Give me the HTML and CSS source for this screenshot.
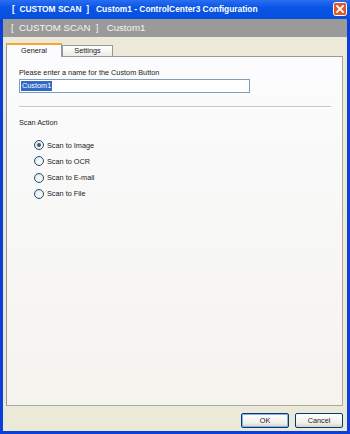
FILE: index.html
```html
<!DOCTYPE html>
<html>
<head>
<title>[ CUSTOM SCAN ] Custom1 - ControlCenter3 Configuration</title>
<link rel="stylesheet" href="styles.css">
</head>
<body>
<div class="window">
  <div class="titlebar">
    <div class="title">[&nbsp; CUSTOM SCAN &nbsp;]&nbsp;&nbsp; Custom1 - ControlCenter3 Configuration</div>
    <div class="close">
      <svg width="14" height="14" viewBox="0 0 14 14">
        <rect x="0.5" y="0.5" width="13" height="13" rx="2" fill="#e3582b" stroke="#fff"/>
        <path d="M4 4 L10 10 M10 4 L4 10" stroke="#fff" stroke-width="1.8" stroke-linecap="square"/>
      </svg>
    </div>
  </div>
  <div class="banner">[&nbsp; CUSTOM SCAN &nbsp;]&nbsp;&nbsp; Custom1</div>
  <div class="body">
    <div class="tabs">
      <div class="tab active">General</div>
      <div class="tab">Settings</div>
    </div>
    <div class="panel">
      <div class="label">Please enter a name for the Custom Button</div>
      <div class="input"><span class="sel">Custom1</span></div>
      <div class="sep"></div>
      <div class="label">Scan Action</div>
      <div class="radios">
        <div class="radio checked"><span class="dot"></span>Scan to Image</div>
        <div class="radio"><span class="dot"></span>Scan to OCR</div>
        <div class="radio"><span class="dot"></span>Scan to E-mail</div>
        <div class="radio"><span class="dot"></span>Scan to File</div>
      </div>
    </div>
    <div class="buttons">
      <button class="btn default">OK</button>
      <button class="btn">Cancel</button>
    </div>
  </div>
</div>
</body>
</html>
```

FILE: styles.css
```css
body {
  margin: 0;
  font-family: 'Liberation Sans', Arial, sans-serif;
  font-size: 7.3px;
  color: #222;
}

.window {
  width: 350px;
  height: 434px;
  box-sizing: border-box;
  display: flex;
  flex-direction: column;
  background-color: #0a3fd8;
  padding: 0 3px 3px 3px;
}

.titlebar {
  height: 19px;
  margin: 0 -3px;
  padding: 0 3px 0 12px;
  display: flex;
  align-items: center;
  justify-content: space-between;
  background: linear-gradient(#2a6ef0, #0a55e6 40%, #0650de);
}

.title {
  color: #fff;
  font-weight: bold;
  font-size: 8.4px;
}

.close {
  width: 14px;
  height: 14px;
  margin-top: -1px;
}

.banner {
  height: 19px;
  display: flex;
  align-items: center;
  padding-left: 8px;
  background-color: #9a9a9a;
  color: #f4f4f4;
  font-size: 9.7px;
}

.body {
  flex: 1;
  background-color: #ece9d8;
  display: flex;
  flex-direction: column;
  padding: 6px 4px 3px 3px;
}

.tabs {
  display: flex;
  align-items: flex-end;
  height: 13px;
}

.tab {
  height: 11px;
  width: 51px;
  box-sizing: border-box;
  text-align: center;
  line-height: 10px;
  border: 1px solid #919b9c;
  border-bottom: none;
  background: linear-gradient(#fff, #ecebe6);
}

.tab.active {
  height: 14px;
  width: 56px;
  margin-bottom: -1px;
  border-top: 2px solid #f4a83c;
  background: #fcfcfe;
  position: relative;
  z-index: 1;
  line-height: 11px;
}

.panel {
  height: 350px;
  box-sizing: border-box;
  border: 1px solid #919b9c;
  border-right-color: #a9a9a4;
  border-bottom-color: #a9a9a4;
  background: linear-gradient(#fcfcfe, #f4f3ee);
  padding: 11px 12px 0 12px;
}

.label {
  line-height: 10px;
}

.input {
  width: 231px;
  height: 14px;
  box-sizing: border-box;
  border: 1px solid #7f9db9;
  background-color: #fff;
  padding: 1px 1px;
  margin-top: 1px;
}

.sel {
  background-color: #316ac5;
  color: #fff;
  line-height: 10px;
  display: inline-block;
  padding: 0 1px;
}

.sep {
  width: 312px;
  height: 1px;
  background-color: #c8c8c0;
  border-bottom: 1px solid #fff;
  margin: 13px 0 10px 0;
}

.radios {
  display: flex;
  flex-direction: column;
  gap: 6.3px;
  padding: 12px 0 0 15px;
}

.radio {
  display: flex;
  align-items: center;
  gap: 3px;
  height: 10px;
}

.dot {
  width: 10px;
  height: 10px;
  box-sizing: border-box;
  border-radius: 50%;
  border: 1px solid #1c5180;
  background: radial-gradient(circle at 60% 60%, #fff, #dcdcd5);
  display: flex;
  align-items: center;
  justify-content: center;
}

.radio.checked .dot::after {
  content: '';
  width: 4px;
  height: 4px;
  border-radius: 50%;
  background-color: #4a5a6a;
}

.buttons {
  display: flex;
  justify-content: flex-end;
  gap: 6px;
  margin-top: 7px;
}

.btn {
  width: 48px;
  height: 15px;
  padding: 0;
  font-family: 'Liberation Sans', Arial, sans-serif;
  font-size: 7.3px;
  color: #222;
  border: 1px solid #003c74;
  border-radius: 2px;
  background: linear-gradient(#fff, #f0f0ea 70%, #d6d0c5);
}

.btn.default {
  box-shadow: inset 0 0 0 1px #8bb0ef;
}
```
